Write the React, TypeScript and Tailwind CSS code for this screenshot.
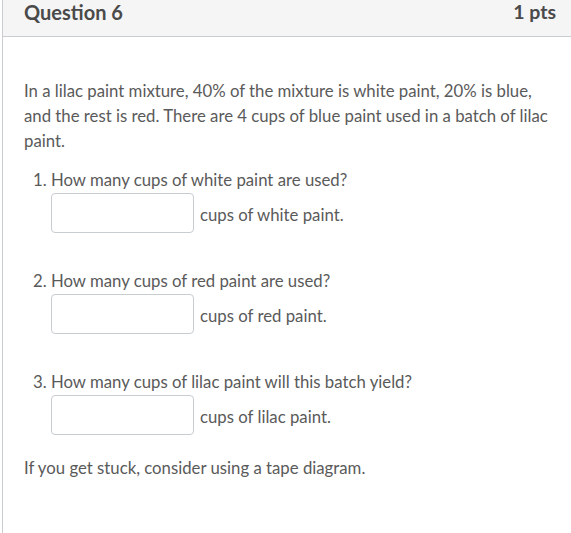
import React from "react";

const items = [
  { q: "1. How many cups of white paint are used?", a: "cups of white paint." },
  { q: "2. How many cups of red paint are used?", a: "cups of red paint." },
  { q: "3. How many cups of lilac paint will this batch yield?", a: "cups of lilac paint." },
];

export default function App() {
  return (
    <div
      className="w-[571px] h-[533px] bg-white overflow-hidden"
      style={{ fontFamily: "Lato, 'Open Sans', sans-serif" }}
    >
      <div className="ml-[2px] h-[533px] border-l border-[#c7cdd1]">
        <div className="h-[37px] bg-[#f5f5f5] border-b border-[#c7cdd1] flex items-center justify-between pl-[21px] pr-[15px] text-[#4a4a4a]">
          <span className="text-[20px] font-bold leading-none -mt-[12px]">Question 6</span>
          <span className="text-[19.5px] font-bold leading-none -mt-[12px]">1 pts</span>
        </div>
        <div className="pl-[21px] pr-[14px] pt-[41px] text-[16.75px] leading-[25px] text-[#5a5a5a]">
          <p>
            In a lilac paint mixture, 40% of the mixture is white paint, 20% is blue, and the rest is red. There
            are 4 cups of blue paint used in a batch of lilac paint.
          </p>
          <div className="mt-[14px] flex flex-col gap-[35px]">
            {items.map((it) => (
              <div key={it.q}>
                <div className="ml-[9px]">{it.q}</div>
                <div className="flex items-center mt-[1px] ml-[27px]">
                  <div className="w-[143px] h-[40px] border border-[#c7cdd1] rounded-[4px] bg-white" />
                  <span className="ml-[6px] mt-[3px]">{it.a}</span>
                </div>
              </div>
            ))}
          </div>
          <p className="mt-[20px]">If you get stuck, consider using a tape diagram.</p>
        </div>
      </div>
    </div>
  );
}
